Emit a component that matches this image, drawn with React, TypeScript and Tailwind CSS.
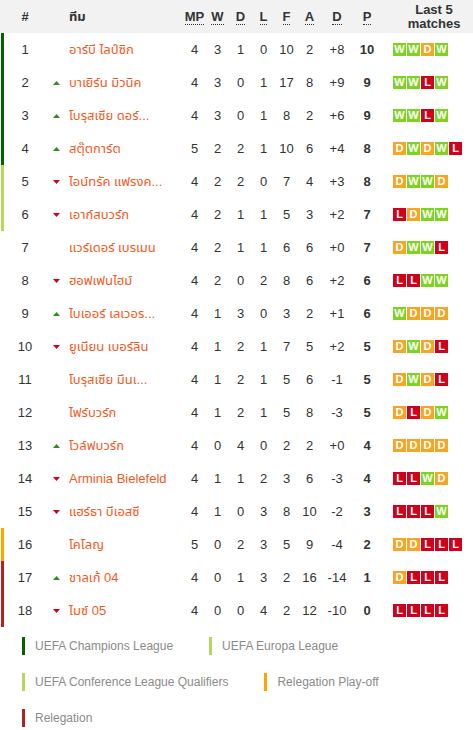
type Row = {
  pos: number;
  move: "up" | "down" | null;
  team: string;
  mp: number;
  w: number;
  d: number;
  l: number;
  f: number;
  a: number;
  diff: string;
  pts: number;
  form: string;
  zone: "cl" | "el" | "po" | "rel" | null;
};

const rows: Row[] = [
  { pos: 1, move: null, team: "อาร์บี ไลป์ซิก", mp: 4, w: 3, d: 1, l: 0, f: 10, a: 2, diff: "+8", pts: 10, form: "WWDW", zone: "cl" },
  { pos: 2, move: "up", team: "บาเยิร์น มิวนิค", mp: 4, w: 3, d: 0, l: 1, f: 17, a: 8, diff: "+9", pts: 9, form: "WWLW", zone: "cl" },
  { pos: 3, move: "up", team: "โบรุสเซีย ดอร์...", mp: 4, w: 3, d: 0, l: 1, f: 8, a: 2, diff: "+6", pts: 9, form: "WWLW", zone: "cl" },
  { pos: 4, move: "up", team: "สตุ๊ตการ์ต", mp: 5, w: 2, d: 2, l: 1, f: 10, a: 6, diff: "+4", pts: 8, form: "DWDWL", zone: "cl" },
  { pos: 5, move: "down", team: "ไอน์ทรัค แฟรงค...", mp: 4, w: 2, d: 2, l: 0, f: 7, a: 4, diff: "+3", pts: 8, form: "DWWD", zone: "el" },
  { pos: 6, move: "down", team: "เอาก์สบวร์ก", mp: 4, w: 2, d: 1, l: 1, f: 5, a: 3, diff: "+2", pts: 7, form: "LDWW", zone: "el" },
  { pos: 7, move: null, team: "แวร์เดอร์ เบรเมน", mp: 4, w: 2, d: 1, l: 1, f: 6, a: 6, diff: "+0", pts: 7, form: "DWWL", zone: null },
  { pos: 8, move: "down", team: "ฮอฟเฟนไฮม์", mp: 4, w: 2, d: 0, l: 2, f: 8, a: 6, diff: "+2", pts: 6, form: "LLWW", zone: null },
  { pos: 9, move: "up", team: "ไบเออร์ เลเวอร...", mp: 4, w: 1, d: 3, l: 0, f: 3, a: 2, diff: "+1", pts: 6, form: "WDDD", zone: null },
  { pos: 10, move: "down", team: "ยูเนียน เบอร์ลิน", mp: 4, w: 1, d: 2, l: 1, f: 7, a: 5, diff: "+2", pts: 5, form: "DWDL", zone: null },
  { pos: 11, move: null, team: "โบรุสเซีย มึนเ...", mp: 4, w: 1, d: 2, l: 1, f: 5, a: 6, diff: "-1", pts: 5, form: "DWDL", zone: null },
  { pos: 12, move: null, team: "ไฟร์บวร์ก", mp: 4, w: 1, d: 2, l: 1, f: 5, a: 8, diff: "-3", pts: 5, form: "DLDW", zone: null },
  { pos: 13, move: "up", team: "โวล์ฟบวร์ก", mp: 4, w: 0, d: 4, l: 0, f: 2, a: 2, diff: "+0", pts: 4, form: "DDDD", zone: null },
  { pos: 14, move: "down", team: "Arminia Bielefeld", mp: 4, w: 1, d: 1, l: 2, f: 3, a: 6, diff: "-3", pts: 4, form: "LLWD", zone: null },
  { pos: 15, move: "down", team: "แฮร์ธา บีเอสซี", mp: 4, w: 1, d: 0, l: 3, f: 8, a: 10, diff: "-2", pts: 3, form: "LLLW", zone: null },
  { pos: 16, move: null, team: "โคโลญ", mp: 5, w: 0, d: 2, l: 3, f: 5, a: 9, diff: "-4", pts: 2, form: "DDLLL", zone: "po" },
  { pos: 17, move: "up", team: "ชาลเก้ 04", mp: 4, w: 0, d: 1, l: 3, f: 2, a: 16, diff: "-14", pts: 1, form: "DLLL", zone: "rel" },
  { pos: 18, move: "down", team: "ไมซ์ 05", mp: 4, w: 0, d: 0, l: 4, f: 2, a: 12, diff: "-10", pts: 0, form: "LLLL", zone: "rel" },
];

const zoneBar = {
  cl: "bg-[#006400]",
  el: "bg-[#b6d65c]",
  po: "bg-[#ffa500]",
  rel: "bg-[#b22222]",
};

const badgeColor: Record<string, string> = {
  W: "bg-[#7ed321]",
  D: "bg-[#f5a623]",
  L: "bg-[#d0021b]",
};

const legend = [
  { label: "UEFA Champions League", color: "bg-[#006400]" },
  { label: "UEFA Europa League", color: "bg-[#b6d65c]" },
  { label: "UEFA Conference League Qualifiers", color: "bg-[#b6d65c]" },
  { label: "Relegation Play-off", color: "bg-[#ffa500]" },
  { label: "Relegation", color: "bg-[#b22222]" },
];

function Arrow({ dir }: { dir: "up" | "down" }) {
  return dir === "up" ? (
    <svg width="7" height="4" viewBox="0 0 7 4">
      <polygon points="0,4 7,4 3.5,0" fill="#2e8b1e" />
    </svg>
  ) : (
    <svg width="7" height="4" viewBox="0 0 7 4">
      <polygon points="0,0 7,0 3.5,4" fill="#d0021b" />
    </svg>
  );
}

function Abbr({ children }: { children: string }) {
  return <span className="border-b border-dotted border-[#333]">{children}</span>;
}

const num = "w-[23px] shrink-0 text-center";

export default function App() {
  return (
    <div
      className="w-[473px] bg-white text-[#333] text-[13px]"
      style={{ fontFamily: '"Liberation Sans", Tahoma, "Noto Sans Thai", "Noto Sans", sans-serif' }}
    >
      {/* header */}
      <div className="flex h-[33px] items-center bg-[#f2f2f2] pl-[4px] font-bold leading-none">
        <div className="w-[42px] shrink-0 text-center">#</div>
        <div className="w-[20px] shrink-0" />
        <div className="w-[117px] shrink-0 pl-[3px]">ทีม</div>
        <div className={num}><Abbr>MP</Abbr></div>
        <div className={num}><Abbr>W</Abbr></div>
        <div className={num}><Abbr>D</Abbr></div>
        <div className={num}><Abbr>L</Abbr></div>
        <div className={num}><Abbr>F</Abbr></div>
        <div className={num}><Abbr>A</Abbr></div>
        <div className="w-[32px] shrink-0 text-center"><Abbr>D</Abbr></div>
        <div className="w-[28px] shrink-0 text-center"><Abbr>P</Abbr></div>
        <div className="w-[92px] shrink-0 pl-[14px] text-center leading-[14px]">
          Last 5
          <br />
          matches
        </div>
      </div>

      {/* rows */}
      <div>
        {rows.map((r) => (
          <div key={r.pos} className="flex h-[33px] items-center">
            <div className={`ml-[1px] h-full w-[3px] shrink-0 ${r.zone ? zoneBar[r.zone] : ""}`} />
            <div className="w-[42px] shrink-0 text-center">{r.pos}</div>
            <div className="flex w-[20px] shrink-0 items-center justify-center">
              {r.move && <Arrow dir={r.move} />}
            </div>
            <div className="w-[117px] shrink-0 whitespace-nowrap pl-[3px] text-[#f45a1e]">{r.team}</div>
            <div className={num}>{r.mp}</div>
            <div className={num}>{r.w}</div>
            <div className={num}>{r.d}</div>
            <div className={num}>{r.l}</div>
            <div className={num}>{r.f}</div>
            <div className={num}>{r.a}</div>
            <div className="w-[32px] shrink-0 text-center">{r.diff}</div>
            <div className="w-[28px] shrink-0 text-center font-bold">{r.pts}</div>
            <div className="flex shrink-0 gap-[1px] pl-[12px]">
              {r.form.split("").map((c, i) => (
                <span
                  key={i}
                  className={`flex h-[13px] w-[13px] items-center justify-center text-[11px] font-bold leading-none text-white ${badgeColor[c]}`}
                >
                  {c}
                </span>
              ))}
            </div>
          </div>
        ))}
      </div>

      {/* legend */}
      <div className="flex flex-wrap pl-[22px] pt-[10px] text-[12px] text-[#8a8a8a]">
        {legend.map((l) => (
          <div key={l.label} className="mr-[36px] flex h-[36px] items-start">
            <div className={`h-[18px] w-[3px] ${l.color}`} />
            <span className="ml-[10px] leading-[18px]">{l.label}</span>
          </div>
        ))}
      </div>
    </div>
  );
}
